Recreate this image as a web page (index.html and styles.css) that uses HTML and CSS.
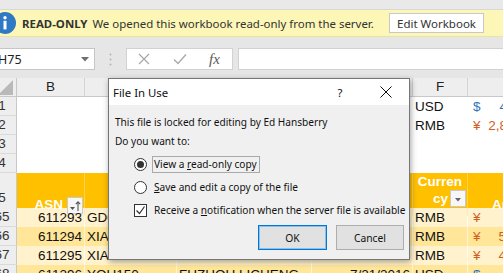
FILE: index.html
```html
<!DOCTYPE html>
<html lang="en">
<head>
  <meta charset="UTF-8" />
  <meta name="viewport" content="width=device-width, initial-scale=1.0" />
  <title>Workbook</title>
  <link rel="stylesheet" href="styles.css">
</head>
<body>
  <div class="top-strip"></div>

  <div class="msgbar">
    <svg class="info-icon" width="22" height="22" viewBox="0 0 22 22">
      <circle cx="11" cy="11" r="11" fill="#2f78c4"/>
      <circle cx="11" cy="5.8" r="1.7" fill="#fff"/>
      <rect x="9.5" y="8.8" width="3" height="8.6" fill="#fff"/>
    </svg>
    <span class="msg-title">READ-ONLY</span>
    <span class="msg-text">We opened this workbook read-only from the server.</span>
    <button class="edit-btn">Edit Workbook</button>
  </div>

  <div class="formula-row">
    <div class="namebox">
      <span>H75</span>
      <svg width="8" height="5" viewBox="0 0 8 5"><path d="M0 0h8L4 4.5z" fill="#6f6f6f"/></svg>
    </div>
    <div class="grip">
      <svg width="3" height="13" viewBox="0 0 3 13">
        <circle cx="1.5" cy="1.5" r="1" fill="#b5b5b5"/>
        <circle cx="1.5" cy="6.5" r="1" fill="#b5b5b5"/>
        <circle cx="1.5" cy="11.5" r="1" fill="#b5b5b5"/>
      </svg>
    </div>
    <div class="fx-tools">
      <svg class="tool-x" width="12" height="12" viewBox="0 0 12 12"><path d="M1 1l10 10M11 1L1 11" stroke="#a9a9a9" stroke-width="1.3"/></svg>
      <svg class="tool-ok" width="14" height="12" viewBox="0 0 14 12"><path d="M1 6.5l4 4L13 1.5" fill="none" stroke="#a9a9a9" stroke-width="1.4"/></svg>
      <span class="fx">fx</span>
    </div>
    <div class="formula-input"></div>
  </div>

  <div class="sheet">
    <div class="row col-head">
      <div class="corner">
        <svg width="15" height="15" viewBox="0 0 15 15"><path d="M15 0V15H0z" fill="#b9b9b9"/></svg>
      </div>
      <div class="ch">B</div>
      <div class="ch">C</div>
      <div class="ch">D</div>
      <div class="ch">E</div>
      <div class="ch">F</div>
      <div class="ch">G</div>
    </div>

    <div class="row">
      <div class="rh">1</div>
      <div class="c"></div><div class="c"></div><div class="c"></div><div class="c"></div>
      <div class="c">USD</div>
      <div class="c acct usd"><span>$</span><span>412,750.00</span></div>
    </div>
    <div class="row">
      <div class="rh">2</div>
      <div class="c"></div><div class="c"></div><div class="c"></div><div class="c"></div>
      <div class="c">RMB</div>
      <div class="c acct rmb"><span>¥</span><span>2,856,000.00</span></div>
    </div>
    <div class="row">
      <div class="rh">3</div>
      <div class="c"></div><div class="c"></div><div class="c"></div><div class="c"></div><div class="c"></div><div class="c"></div>
    </div>
    <div class="row">
      <div class="rh">4</div>
      <div class="c"></div><div class="c"></div><div class="c"></div><div class="c"></div><div class="c"></div><div class="c"></div>
    </div>

    <div class="row tbl-head">
      <div class="rh">5</div>
      <div class="th th-asn">
        <span>ASN</span>
        <span class="filter-btn">
          <svg width="12" height="12" viewBox="0 0 12 12">
            <path d="M1 7h5L3.5 10z" fill="#555"/>
            <path d="M9 11V2M6.8 4.2L9 1.8l2.2 2.4" fill="none" stroke="#555" stroke-width="1.1"/>
          </svg>
        </span>
      </div>
      <div class="th th-right">Vessel</div>
      <div class="th th-right">Supplier</div>
      <div class="th th-right">Ship Date</div>
      <div class="th th-wrap">
        <span class="wrap-1">Curren</span>
        <span class="wrap-2">cy
          <span class="filter-btn">
            <svg width="12" height="12" viewBox="0 0 12 12"><path d="M3 5h6L6 8.5z" fill="#666"/></svg>
          </span>
        </span>
      </div>
      <div class="th th-amt">Amount</div>
    </div>

    <div class="row band-a">
      <div class="rh">65</div>
      <div class="c num">611293</div>
      <div class="c">GD0821</div>
      <div class="c">GUANGZHOU JINSHUN</div>
      <div class="c num">7/19/2016</div>
      <div class="c">RMB</div>
      <div class="c acct rmb"><span>¥</span><span>95,000.00</span></div>
    </div>
    <div class="row band-b">
      <div class="rh">66</div>
      <div class="c num">611294</div>
      <div class="c">XIA0117</div>
      <div class="c">XIAMEN HUAXIN</div>
      <div class="c num">7/20/2016</div>
      <div class="c">RMB</div>
      <div class="c acct rmb"><span>¥</span><span>524,800.00</span></div>
    </div>
    <div class="row band-a">
      <div class="rh">67</div>
      <div class="c num">611295</div>
      <div class="c">XIA0119</div>
      <div class="c">XIAMEN HUAXIN</div>
      <div class="c num">7/20/2016</div>
      <div class="c">RMB</div>
      <div class="c acct rmb"><span>¥</span><span>486,000.00</span></div>
    </div>
    <div class="row band-b">
      <div class="rh">68</div>
      <div class="c num">611296</div>
      <div class="c">YOU150</div>
      <div class="c">FUZHOU LICHENG</div>
      <div class="c num">7/21/2016</div>
      <div class="c">USD</div>
      <div class="c acct usd"><span>$</span><span>8,500.00</span></div>
    </div>
  </div>

  <div class="dialog">
    <div class="dlg-title">
      <span class="dlg-name">File In Use</span>
      <span class="dlg-help">?</span>
      <span class="dlg-close">
        <svg width="12" height="12" viewBox="0 0 12 12"><path d="M0.5 0.5l11 11M11.5 0.5l-11 11" stroke="#111" stroke-width="1"/></svg>
      </span>
    </div>
    <div class="dlg-body">
      <p class="dlg-line">This file is locked for editing by Ed Hansberry</p>
      <p class="dlg-line">Do you want to:</p>
      <div class="options">
        <label class="opt"><span class="radio checked"></span><span class="opt-text focus">View a <u>r</u>ead-only copy</span></label>
        <label class="opt"><span class="radio"></span><span class="opt-text"><u>S</u>ave and edit a copy of the file</span></label>
        <label class="opt">
          <span class="check">
            <svg width="11" height="11" viewBox="0 0 11 11"><path d="M1.5 5.5l3 3 5-7" fill="none" stroke="#333" stroke-width="1.2"/></svg>
          </span>
          <span class="opt-text">Receive a <u>n</u>otification when the server file is available</span>
        </label>
      </div>
      <div class="dlg-buttons">
        <button class="btn btn-default">OK</button>
        <button class="btn">Cancel</button>
      </div>
    </div>
  </div>
</body>
</html>
```

FILE: styles.css
```css
* {
  box-sizing: border-box;
}

body {
  margin: 0;
  width: 503px;
  height: 273px;
  overflow: hidden;
  position: relative;
  background: #e6e6e6;
  font-family: 'Noto Sans', 'Open Sans', sans-serif;
  color: #222;
}

/* message bar */

.top-strip {
  height: 10px;
  background: #e9e9e9;
  border-bottom: 1px solid #d8d8d8;
}

.msgbar {
  display: flex;
  align-items: center;
  height: 27px;
  background: #fcf7b6;
  border-bottom: 1px solid #e9e3a4;
  font-size: 11.45px;
  color: #333;
  white-space: nowrap;
}

.info-icon {
  flex: none;
  margin-left: -6px;
  margin-right: 6px;
}

.msg-title {
  font-weight: 700;
  margin-right: 5px;
}

.edit-btn {
  margin-left: auto;
  margin-right: 19px;
  width: 95px;
  height: 20px;
  padding: 0;
  background: #fff;
  border: 1px solid #c8c8c8;
  font-family: inherit;
  font-size: 11.5px;
  color: #333;
}

/* formula bar */

.formula-row {
  display: flex;
  height: 22px;
  margin-top: 11px;
}

.namebox {
  width: 96px;
  margin-left: -1px;
  display: flex;
  align-items: center;
  justify-content: space-between;
  padding-right: 5px;
  background: #fff;
  border: 1px solid #c6c6c6;
  font-size: 12.5px;
  color: #222;
}

.namebox span {
  margin-left: -2px;
}

.grip {
  width: 31px;
  display: flex;
  align-items: center;
  justify-content: center;
}

.fx-tools {
  width: 107px;
  display: flex;
  align-items: center;
  padding-left: 11px;
  background: #fff;
  border: 1px solid #d2d2d2;
}

.tool-ok {
  margin-left: 23px;
}

.fx {
  margin-left: 22px;
  font-family: 'Liberation Serif', serif;
  font-style: italic;
  font-size: 15px;
  color: #5a5a5a;
}

.formula-input {
  flex: 1;
  margin-left: 5px;
  margin-right: -1px;
  background: #fff;
  border: 1px solid #d2d2d2;
}

/* sheet */

.sheet {
  margin-top: 8px;
  margin-left: -12px;
  font-family: 'Liberation Sans', Arial, sans-serif;
  font-size: 13.5px;
  color: #111;
}

.row {
  display: grid;
  grid-template-columns: 29px 68px 92px 135px 101px 55px 103px;
  height: 19px;
  background: #fff;
}

.c {
  padding: 0 2px;
  line-height: 19px;
  white-space: nowrap;
  overflow: hidden;
}

.c.num {
  text-align: right;
}

.rh {
  text-align: center;
  line-height: 18px;
  background: #eeeeee;
  border-right: 1px solid #c8c8c8;
  border-bottom: 1px solid #dadada;
  color: #333;
}

.col-head {
  background: #eeeeee;
}

.corner {
  display: flex;
  justify-content: flex-end;
  align-items: flex-end;
  padding: 0 3px 1px 0;
  border-right: 1px solid #c8c8c8;
  border-bottom: 1px solid #c8c8c8;
}

.ch {
  text-align: center;
  line-height: 18px;
  border-right: 1px solid #d4d4d4;
  border-bottom: 1px solid #c8c8c8;
  color: #222;
}

.acct {
  display: flex;
  justify-content: space-between;
  padding: 0 4px 0 5px;
}

.usd {
  color: #2e75b6;
}

.rmb {
  color: #d0601c;
}

/* table header */

.tbl-head {
  height: 35px;
  background: #ffc000;
}

.tbl-head .rh {
  line-height: 34px;
  padding-top: 8px;
}

.th {
  display: flex;
  align-items: flex-end;
  padding: 0 2px 3px;
  font-weight: 700;
  color: #fff;
  white-space: nowrap;
  overflow: hidden;
  line-height: 17px;
  border-right: 1px solid #ffd24f;
}

.th-right {
  justify-content: flex-end;
  padding-right: 20px;
}

.th-asn {
  justify-content: flex-end;
  gap: 4px;
  padding-right: 1px;
  padding-bottom: 2px;
}

.th-asn span:first-child {
  padding-bottom: 1px;
}

.th-wrap {
  flex-direction: column;
  align-items: stretch;
  padding: 0 1px 2px 1px;
}

.wrap-1 {
  text-align: center;
}

.wrap-2 {
  display: flex;
  justify-content: flex-end;
  align-items: flex-end;
  gap: 2px;
}

.th-amt {
  padding-left: 24px;
}

.filter-btn {
  width: 16px;
  height: 17px;
  display: flex;
  align-items: center;
  justify-content: center;
  background: #f7f7f7;
  border: 1px solid #c9c9c9;
}

/* data rows */

.band-a {
  background: #fff2cc;
}

.band-b {
  background: #ffe699;
}

.band-a .c,
.band-b .c {
  border-right: 1px solid rgba(255, 255, 255, 0.6);
}

/* dialog */

.dialog {
  position: absolute;
  left: 108px;
  top: 78px;
  width: 302px;
  background: #f0f0f0;
  border: 1px solid #767676;
  box-shadow: 1px 2px 6px rgba(0, 0, 0, 0.35);
  color: #111;
}

.dlg-title {
  display: flex;
  align-items: center;
  height: 26px;
  background: #fff;
  font-size: 11.4px;
}

.dlg-name {
  flex: 1;
  padding-left: 4px;
}

.dlg-help {
  width: 30px;
  text-align: center;
}

.dlg-close {
  width: 46px;
  margin-left: 8px;
  display: flex;
  justify-content: center;
}

.dlg-body {
  padding: 8px 0 9px 6px;
  font-size: 10.1px;
}

.dlg-line {
  margin: 0;
  line-height: 19px;
}

.options {
  display: flex;
  flex-direction: column;
  gap: 5px;
  margin-top: 4px;
  padding-left: 19px;
}

.opt {
  display: flex;
  align-items: center;
  height: 18px;
}

.radio {
  width: 13px;
  height: 13px;
  border-radius: 50%;
  border: 1px solid #333;
  background: #fff;
  display: flex;
  align-items: center;
  justify-content: center;
}

.radio.checked::after {
  content: "";
  width: 7px;
  height: 7px;
  border-radius: 50%;
  background: #333;
}

.check {
  width: 13px;
  height: 13px;
  border: 1px solid #333;
  background: #fff;
  display: flex;
  align-items: center;
  justify-content: center;
}

.opt-text {
  margin-left: 5px;
  padding: 0 2px 0 1px;
  line-height: 15px;
  border: 1px solid transparent;
  white-space: nowrap;
}

.opt-text.focus {
  border-color: #a9a9a9;
}

.dlg-buttons {
  display: flex;
  justify-content: flex-end;
  gap: 9px;
  margin-top: 6px;
  padding-right: 5px;
}

.btn {
  width: 68px;
  height: 25px;
  padding: 0;
  background: #e1e1e1;
  border: 1px solid #adadad;
  font-family: inherit;
  font-size: 10.3px;
  color: #111;
}

.btn-default {
  width: 69px;
  border: 1px solid #0078d7;
  box-shadow: inset 0 0 0 1px #8cc0ea;
}
```
